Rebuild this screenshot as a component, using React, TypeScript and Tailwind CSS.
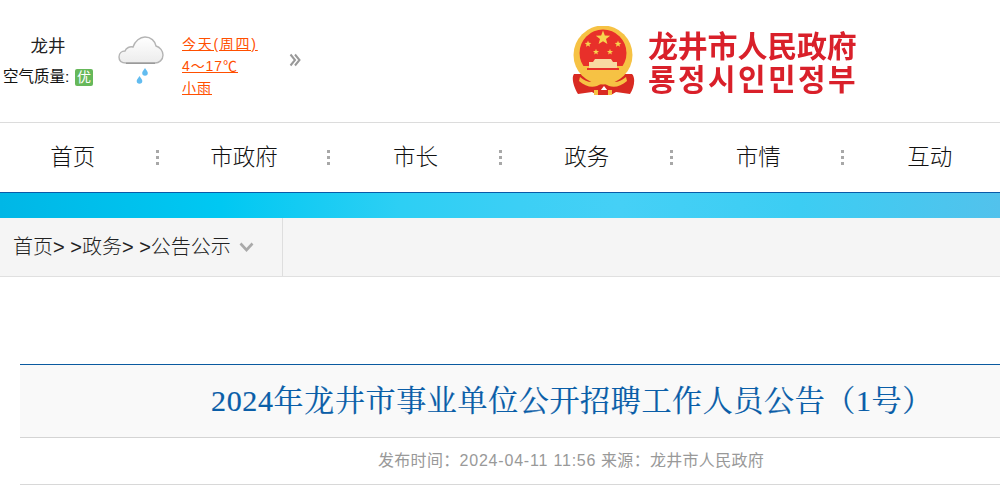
import React from "react";

const sans = "font-['Liberation_Sans','Noto_Sans_CJK_SC',sans-serif]";

function Star({ x, y, r }: { x: number; y: number; r: number }) {
  const pts = Array.from({ length: 10 }, (_, i) => {
    const a = (-90 + i * 36) * (Math.PI / 180);
    const q = i % 2 === 0 ? r : r * 0.42;
    return `${(x + q * Math.cos(a)).toFixed(2)},${(y + q * Math.sin(a)).toFixed(2)}`;
  }).join(" ");
  return <polygon points={pts} fill="#f7d34e" />;
}

function Emblem() {
  return (
    <svg width="64" height="70" viewBox="0 0 64 70" className="blur-[0.5px]">
      <path d="M2 48 C-1 52 2 62 6 68 L20 66 L25 69 L32 60 L39 69 L44 66 L58 68 C62 62 64 52 60 48 Z" fill="#d92a22" />
      <circle cx="31" cy="29" r="29.500" fill="#f6c244" />
      <circle cx="31" cy="27" r="23.500" fill="#e8302a" />
      <path d="M8.500 40h45c-3 8-10 13-22.500 13S11.500 48 8.500 40z" fill="#f6c244" />
      <Star x={31} y={12} r={7.500} />
      <Star x={16} y={18} r={3.500} />
      <Star x={46} y={18} r={3.500} />
      <Star x={24} y={26} r={3.200} />
      <Star x={38} y={26} r={3.200} />
      <path d="M23 33h16l2 3h4v6H17v-6h4z" fill="#f8d9a2" />
      <path d="M15 42h32v2H15z" fill="#e8302a" />
      <path d="M8 51c6 5 11 6 16 4 3-2 5-4 7-4s4 2 7 4c5 2 10 1 16-4l1 4c-6 5-12 7-18 5-3-1-4-3-6-3s-3 2-6 3c-6 2-12 0-18-5z" fill="#f6c244" />
      <path d="M22 64h18v5H22z" fill="#f6c244" />
      <path d="M26 64h10v5H26z" fill="#d92a22" />
    </svg>
  );
}

function Cloud() {
  return (
    <svg width="46" height="48" viewBox="0 0 46 48">
      <defs>
        <linearGradient id="cl" x1="0" y1="0" x2="0" y2="1">
          <stop offset="0" stopColor="#ffffff" />
          <stop offset="1" stopColor="#ececec" />
        </linearGradient>
      </defs>
      <path
        d="M8 27C3 27 1 24 1 21C1 17 4 15 7 15C8 12 12 10 15 11C17 5 22 1 27 1C33 1 37 5 38 10C42 11 45 15 45 19C45 24 41 27 37 27Z"
        fill="url(#cl)"
        stroke="#b4b4b4"
        strokeWidth="1.400"
      />
      <path d="M8 27.300h29" stroke="#9a9a9a" strokeWidth="1.400" />
      <path d="M27 32c1.700 2.500 2.800 3.700 2.800 5a2.800 2.800 0 0 1-5.600 0c0-1.300 1.100-2.500 2.800-5z" fill="#62bcf0" />
      <path d="M21.500 40c1.700 2.500 2.800 3.700 2.800 5a2.800 2.800 0 0 1-5.600 0c0-1.300 1.100-2.500 2.800-5z" fill="#62bcf0" />
    </svg>
  );
}

function Sep() {
  return (
    <div className="flex flex-col gap-[3px]">
      <span className="block w-[3px] h-[3px] bg-[#a8a8a8]" />
      <span className="block w-[3px] h-[3px] bg-[#a8a8a8]" />
      <span className="block w-[3px] h-[3px] bg-[#a8a8a8]" />
    </div>
  );
}

const navItems = ["首页", "市政府", "市长", "政务", "市情", "互动"];

export default function App() {
  return (
    <div className={`h-[485px] w-[1000px] overflow-hidden bg-white ${sans}`}>
      <header className="h-[123px] border-b border-[#dcdcdc] flex pt-[29px] items-start">
        <div className="w-[96px] pl-[3px] shrink-0 flex flex-col items-start">
          <div className="text-[17.500px] leading-[34px] text-[#222] w-[90px] text-center">龙井</div>
          <div className="flex items-center gap-[3px] mt-[3px] h-[22px] text-[#111] whitespace-nowrap">
            <span className="text-[15.500px] w-[69px]">空气质量:</span>
            <span className="w-[18px] h-[17px] rounded-[2px] bg-[#66b85a] text-white text-[14px] leading-[17px] text-center">优</span>
          </div>
        </div>
        <div className="ml-[22px] mt-[7px] w-[46px] shrink-0"><Cloud /></div>
        <div className="ml-[18px] mt-[4px] flex flex-col items-start text-[14px] leading-[22px] text-[#ff4f00] underline whitespace-nowrap w-[100px] shrink-0">
          <a className="tracking-[1.700px]">今天(周四)</a>
          <a className="tracking-[0.900px]">4～17℃</a>
          <a className="tracking-[1px]">小雨</a>
        </div>
        <svg width="12" height="14" viewBox="0 0 12 14" className="ml-[7px] mt-[24px] shrink-0">
          <path d="M1.500 1.500L6 7l-4.500 5.500M6 1.500L10.500 7 6 12.500" fill="none" stroke="#999" strokeWidth="2" />
        </svg>
        <div className="ml-[271px] -mt-[3px] flex items-center gap-[12px] shrink-0">
          <Emblem />
          <div className="flex flex-col text-[#d9202a] font-bold blur-[0.3px] whitespace-nowrap">
            <span className="text-[30px] leading-[31px] tracking-[-0.200px]">龙井市人民政府</span>
            <span className="text-[30px] leading-[30px] tracking-[2.400px] font-['Noto_Sans_CJK_KR',sans-serif]">룡정시인민정부</span>
          </div>
        </div>
      </header>

      <nav className="h-[69px] -ml-[13px] flex items-center">
        {navItems.map((t, i) => (
          <div key={t} className="relative w-[171.400px] shrink-0 text-center text-[22.500px] font-light text-[#111] leading-[69px]">
            {t}
            {i < navItems.length - 1 && (
              <div className="absolute -right-[0.500px] top-[27px]"><Sep /></div>
            )}
          </div>
        ))}
      </nav>

      <div className="h-[26px] border-t border-[#0a5aa8] bg-[linear-gradient(90deg,#00b7e6_0%,#00c8f2_22%,#2dcff4_40%,#3ccff5_52%,#45d0f6_62%,#3ccdf3_80%,#52c2ec_100%)]" />

      <div className="h-[59px] bg-[#f5f5f5] border-b border-[#e0e0e0] flex">
        <div className="w-[283px] border-r border-[#dedede] pl-[13px] flex items-center gap-[8px] text-[20px] font-light text-[#222] whitespace-nowrap">
          <span>首页&gt; &gt;政务&gt; &gt;公告公示</span>
          <svg width="15" height="10" viewBox="0 0 15 10">
            <path d="M1.500 1.500L7.500 8l6-6.500" fill="none" stroke="#aaa" strokeWidth="2.600" />
          </svg>
        </div>
      </div>

      <main className="ml-[20px] mt-[87px]">
        <div className="h-[74px] border-t border-b border-t-[#0a5aa0] border-b-[#d4d4d4] bg-[#f9f9f9] pl-[191px] flex items-center">
          <h1 className="text-[30px] leading-[40px] text-[#0a5ea8] tracking-[0.650px] [-webkit-text-stroke:0.200px_#0a5ea8] whitespace-nowrap font-['Liberation_Serif','Noto_Serif_CJK_SC','Noto_Sans_CJK_SC',serif]">
            2024年龙井市事业单位公开招聘工作人员公告（1号）
          </h1>
        </div>
        <div className="h-[47px] border-b border-[#d8d8d8] pl-[358px] flex items-center text-[16px] tracking-[0.300px] text-[#999] whitespace-nowrap">
          发布时间：<span className="tracking-[0.800px]">2024-04-11 11:56</span>&nbsp;来源：龙井市人民政府
        </div>
      </main>
    </div>
  );
}
